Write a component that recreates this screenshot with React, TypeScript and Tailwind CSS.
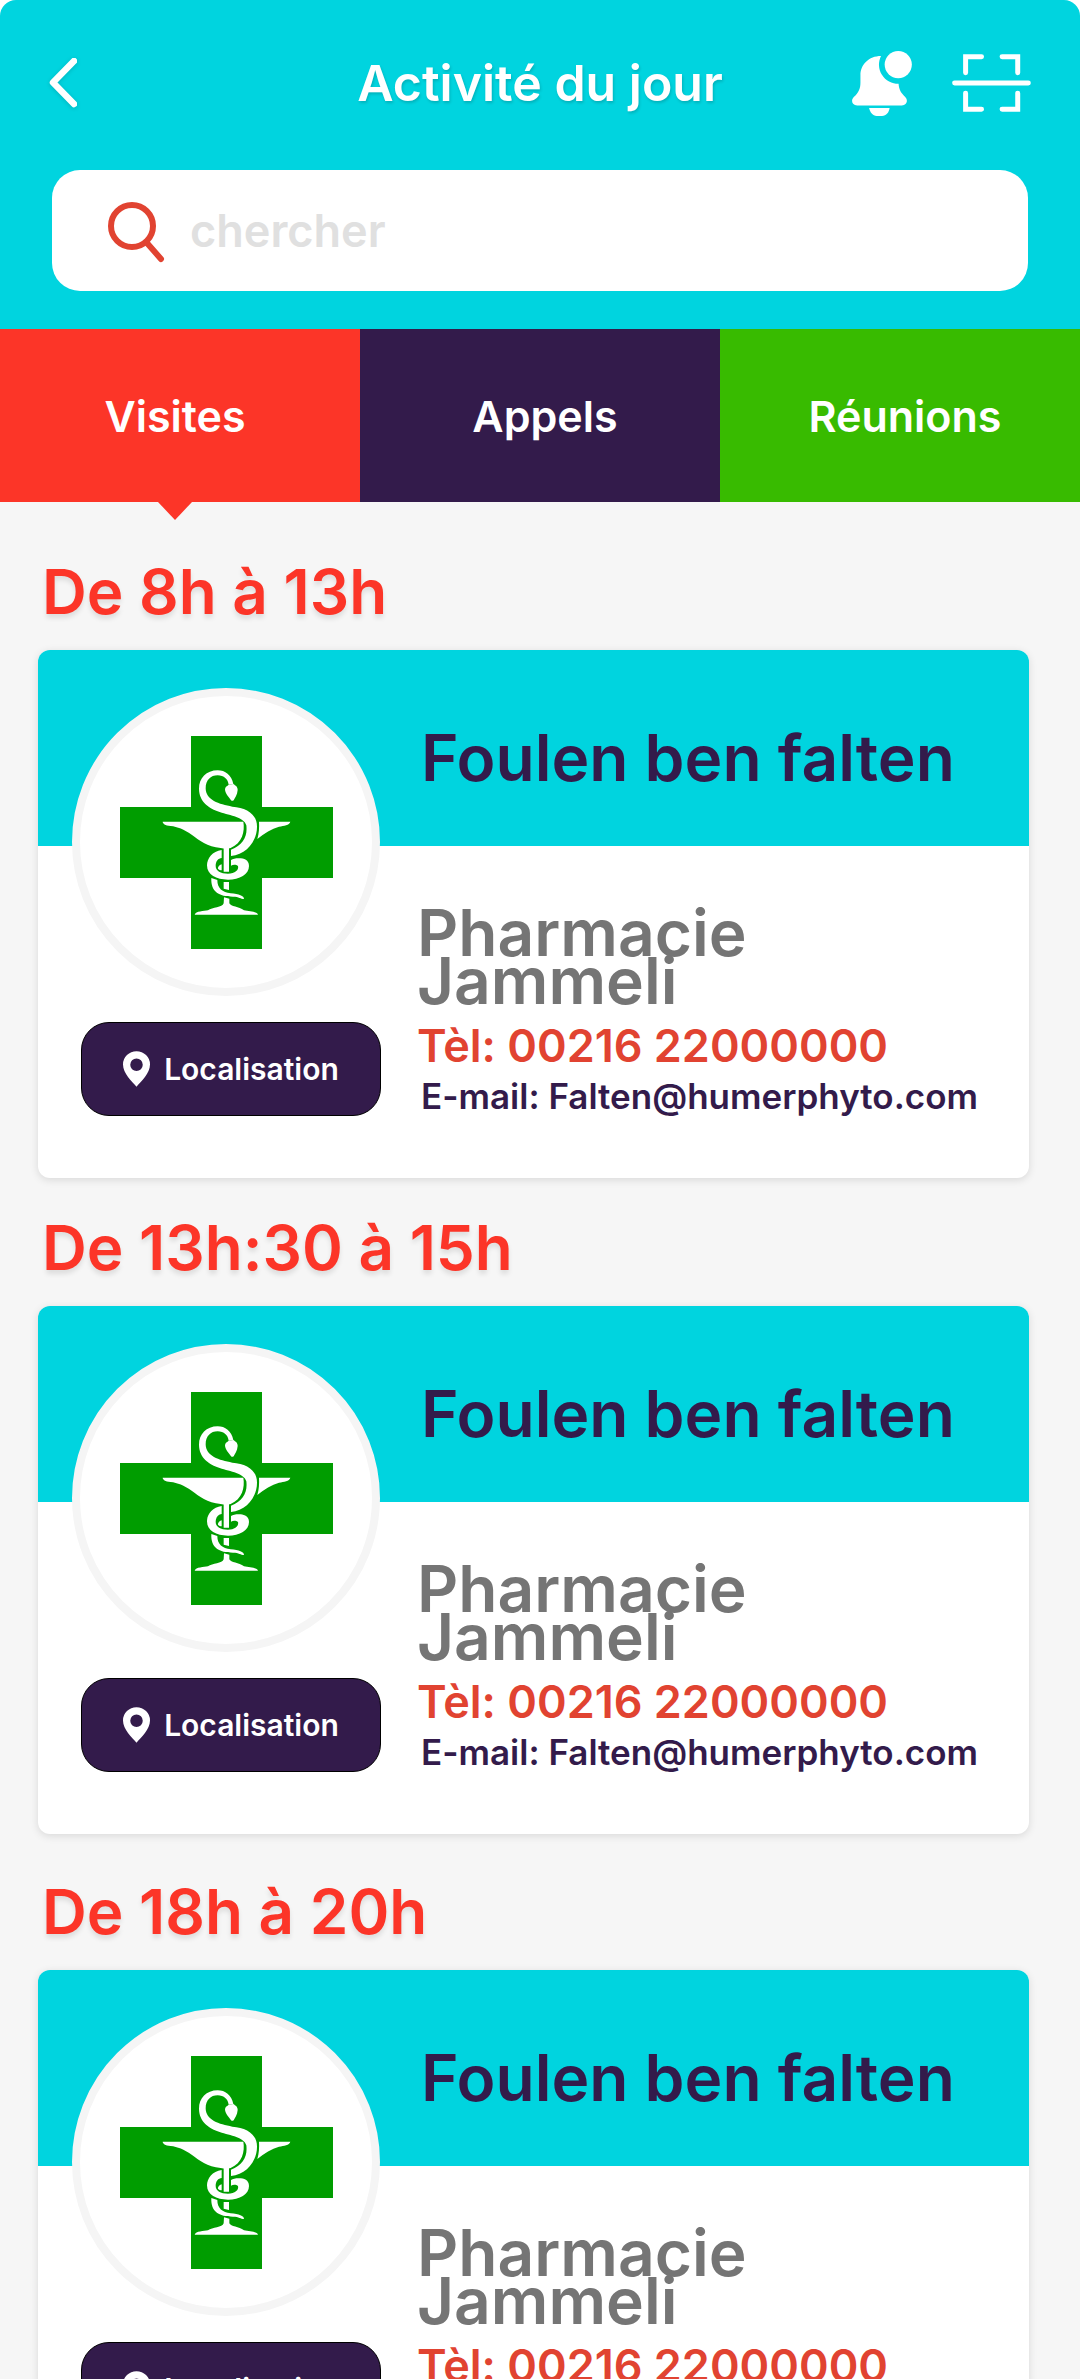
import React from "react";

type Visit = {
  slot: string;
  name: string;
  place: string;
  phone: string;
  email: string;
  spacing: string;
};

const contact = {
  name: "Foulen ben falten",
  place: "Pharmacie Jammeli",
  phone: "00216 22000000",
  email: "Falten@humerphyto.com",
};

const visits: Visit[] = [
  { slot: "De 8h à 13h", spacing: "", ...contact },
  { slot: "De 13h:30 à 15h", spacing: "mt-10", ...contact },
  { slot: "De 18h à 20h", spacing: "mt-12", ...contact },
];

function ChevronIcon() {
  return (
    <svg viewBox="49 60 28 50" className="h-[50px] w-7" fill="none" aria-hidden="true">
      <path d="M74 63 L53 84.5 L74 106" stroke="currentColor" strokeWidth="6.5" strokeLinecap="round" strokeLinejoin="round" />
    </svg>
  );
}

function BellIcon() {
  return (
    <svg viewBox="36 33 180 196" className="h-[65px] w-[60px]" fill="currentColor" aria-hidden="true">
      <circle cx="175" cy="74" r="41" />
      <path d="M123 48 A58 58 0 0 0 176 132 C177 150 184 160 196 172 C206 182 200 197 186 197 H51 C36 197 31 182 41 172 C56 158 61 146 61 128 V106 C61 74 86 48 123 48 Z" />
      <path d="M87 205 H149 C147 218 139 229 126 229 H110 C98 229 90 218 87 205 Z" />
    </svg>
  );
}

function ScanIcon() {
  return (
    <svg viewBox="336 42 238 174" className="h-[58px] w-[79px]" fill="none" stroke="currentColor" strokeWidth="15" strokeLinecap="round" aria-hidden="true">
      <path d="M377 98 V50 H425 M487 50 H534 V98 M377 160 V208 H425 M487 208 H534 V160 M344 129 H566" />
    </svg>
  );
}

function SearchIcon() {
  return (
    <svg viewBox="108 204 57 61" className="mt-1 h-[61px] w-[57px] shrink-0" fill="none" stroke="#e14331" strokeWidth="6" strokeLinecap="round" aria-hidden="true">
      <circle cx="132" cy="228" r="21" />
      <path d="M147 245 L161 261" />
    </svg>
  );
}

function PinIcon() {
  return (
    <svg viewBox="269 216 82 108" className="h-9 w-[27px]" fill="currentColor" aria-hidden="true">
      <path fillRule="evenodd" d="M310 324 C296 306 269 284 269 256 A41 40 0 0 1 351 256 C351 284 324 306 310 324 Z M310 238 A19 19 0 1 0 310 276 A19 19 0 1 0 310 238 Z" />
    </svg>
  );
}

function PharmacyCross() {
  return (
    <svg viewBox="273 288 639 639" className="size-[213px]" role="img" aria-label="Pharmacie">
      <path fill="#009d00" d="M486 288 H699 V501 H912 V714 H699 V927 H486 V714 H273 V501 H486 Z" />
      <g fill="#fff">
        <path d="M401 545 H643 C648 575 640 608 605 624 Q592 628 575 624 C535 620 510 600 488 584 C465 568 445 560 425 558 C408 557 401 550 401 545 Z" />
        <path d="M690 545 H784 C781 556 765 557 750 560 C728 566 706 580 685 597 C690 580 691 562 690 545 Z" />
        <path d="M613 432 C608 405 588 391 566 391 C532 391 510 415 510 446 C510 485 540 505 572 516 C605 527 646 532 652 556 C656 590 642 614 606 629 V648 C650 645 684 605 684 560 C684 520 650 503 610 500 C570 493 530 480 530 445 C530 420 545 406 566 406 C585 406 597 418 599 434 Z" />
        <path d="M599 434 L613 432 C620 437 626 440 626 450 C625 465 617 475 614 481 Q610 484 606 481 C600 472 588 460 588 448 C588 440 595 438 599 434 Z" />
        <path d="M578 630 C550 634 534 655 534 676 C534 705 562 719 597 719 C632 719 660 703 660 678 C660 660 645 655 630 655 C618 655 612 657 606 660 V677 C612 673 622 673 627 678 C630 690 618 701 597 701 C575 701 560 693 560 678 C560 663 568 655 578 654 Z" />
        <path d="M578 673 C570 675 566 682 567 686 C570 690 574 690 578 691 Z" />
        <path d="M584 620 H600 V695 H584 Z M584 726 H600 V750 L584 746 Z" />
        <path d="M547 714 L565 720 C565 745 580 757 605 760 C630 762 645 768 645 777 C635 777 630 770 612 770 C570 770 545 755 547 714 Z" />
        <path d="M585 772 L601 776 V790 C605 800 630 800 645 811 C660 815 685 814 687 824 H497 C500 813 525 814 537 811 C550 802 580 803 584 790 Z" />
      </g>
    </svg>
  );
}

function VisitCard({ visit }: { visit: Visit }) {
  return (
    <section className={visit.spacing}>
      <h2 className="mb-7 pl-1 text-[62px] leading-[60px] text-[#fc3528] [text-shadow:0_4px_5px_rgba(0,0,0,0.1)]">{visit.slot}</h2>
      <article className="grid grid-cols-[379px_1fr] grid-rows-[196px_auto] overflow-hidden rounded-xl bg-white shadow-[0_2px_8px_rgba(0,0,0,0.12)]">
        <div className="col-span-2 col-start-1 row-start-1 bg-[#00d4df]" />
        <div className="col-start-1 row-span-2 row-start-1 flex flex-col items-start pt-[38px] pb-[62px] pl-[34px]">
          <div className="flex size-[308px] items-center justify-center rounded-full border-8 border-[#f5f5f5] bg-white">
            <PharmacyCross />
          </div>
          <button type="button" className="mt-[26px] ml-[9px] flex h-[94px] w-[300px] items-center justify-center gap-3.5 rounded-[28px] border border-black bg-[#331b4b] text-[30px] leading-10 text-white">
            <PinIcon />
            Localisation
          </button>
        </div>
        <h3 className="col-start-2 row-start-1 flex items-center pt-5 pl-1 text-[64px] leading-[62px] whitespace-nowrap text-[#331b4b]">{visit.name}</h3>
        <div className="col-start-2 row-start-2 pt-[63px]">
          <p className="max-w-[400px] text-[64px] leading-[48px] text-[#757575]">{visit.place}</p>
          <p className="mt-4 text-[45px] leading-[50px] whitespace-nowrap text-[#e14331]">Tèl: {visit.phone}</p>
          <p className="pl-1 text-[35px] leading-[50px] whitespace-nowrap text-[#331b4b]">E-mail: {visit.email}</p>
        </div>
      </article>
    </section>
  );
}

export default function App() {
  return (
    <div className="flex h-screen flex-col overflow-hidden bg-white font-['Inter','Liberation_Sans',sans-serif] font-semibold">
      <header className="shrink-0 rounded-t-2xl bg-[#00d4df] pb-[38px] text-white">
        <div className="mb-1 grid h-[166px] grid-cols-[1fr_auto_1fr] items-center px-[49px]">
          <button type="button" aria-label="Retour" className="justify-self-start drop-shadow-sm">
            <ChevronIcon />
          </button>
          <h1 className="text-[50px] leading-[60px] [text-shadow:1px_2px_3px_rgba(0,0,0,0.16)]">Activité du jour</h1>
          <div className="flex items-center gap-10 justify-self-end">
            <button type="button" aria-label="Notifications">
              <BellIcon />
            </button>
            <button type="button" aria-label="Scanner">
              <ScanIcon />
            </button>
          </div>
        </div>
        <label className="mx-[52px] flex h-[121px] items-center gap-[25px] rounded-[28px] bg-white pr-8 pl-14">
          <SearchIcon />
          <input type="search" aria-label="chercher" placeholder="chercher" className="min-w-0 flex-1 bg-transparent text-[45px] leading-[60px] text-[#331b4b] outline-none placeholder:text-[#e0e0e0]" />
        </label>
      </header>

      <nav className="grid h-[173px] shrink-0 grid-cols-3 text-[43px] leading-[60px] text-white [text-shadow:1px_2px_3px_rgba(0,0,0,0.18)]">
        <button type="button" aria-current="page" className="relative bg-[#fc3528] pr-2.5">
          Visites
          <span className="absolute inset-x-0 top-full flex justify-center pr-2.5">
            <svg viewBox="0 0 34 18" className="h-[18px] w-[34px]" aria-hidden="true">
              <path d="M0 0 H34 L17 18 Z" fill="#fc3528" />
            </svg>
          </span>
        </button>
        <button type="button" className="bg-[#331b4b] pl-2.5">Appels</button>
        <button type="button" className="bg-[#38bb00] pl-2.5">Réunions</button>
      </nav>

      <main className="min-h-0 flex-1 overflow-y-auto bg-[#f6f6f6] pt-[60px] pr-[51px] pb-12 pl-[38px] [scrollbar-width:none]">
        {visits.map((visit) => (
          <VisitCard key={visit.slot} visit={visit} />
        ))}
      </main>
    </div>
  );
}
